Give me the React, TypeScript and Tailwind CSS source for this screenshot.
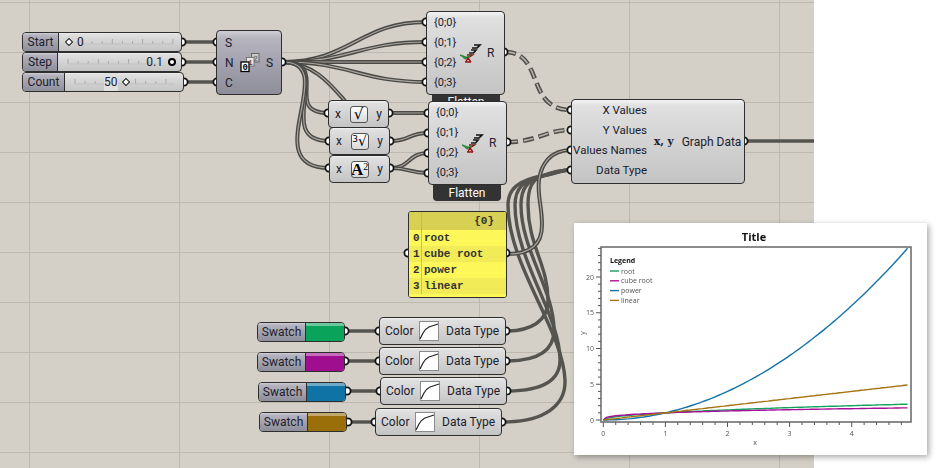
import type { ReactNode } from "react";

const nodeSkin =
  "absolute flex items-center whitespace-nowrap rounded-[4px] border border-[#2e2e2e] bg-linear-to-b from-[#f4f4f4] via-[#e0e0e0] via-[7%] to-[#c4c4c4]";
const graySkin = "bg-linear-to-b from-[#d0cfd6] via-[#b4b3be] via-[12%] to-[#8e8d9a]";

const doubleWires = [
  "M283 62C350 62 360 22 426 22",
  "M283 62C350 62 360 42 426 42",
  "M283 62L426 62",
  "M283 62C350 62 360 82 426 82",
  "M283 62C315 64 330 84 345 101",
  "M283 62C332 62 282 113 328 113",
  "M283 62C336 62 272 141 329 141",
  "M283 62C342 62 255 168 329 168",
  "M390 113L428 113",
  "M391 141C410 141 408 133 428 133",
  "M391 168C410 168 408 153 428 153",
  "M391 168C410 168 408 173 428 173",
  "M508 254C530 254 542 245 542 225C542 205 537 195 539 180C541 165 550 150 571 150",
];

const dashedWires = ["M505 52C545 52 525 110 571 110", "M507 142C538 142 545 130 571 130"];

const singleWires = [
  "M182 42H217",
  "M182 62H217",
  "M184 82H217",
  "M345 331H380",
  "M345 361H380",
  "M347 391H381",
  "M348 422H376",
  "M744 141H814",
  "M506 331C530 331 548 322 548 300C548 265 528 245 528 205C528 188 532 180 542 176S560 170 571 170",
  "M506 361C535 361 554 352 554 330C554 290 521 250 521 205C521 188 528 180 542 176S560 170 571 170",
  "M507 391C540 391 560 382 560 360C560 315 515 260 515 205C515 188 524 180 542 176S560 170 571 170",
  "M503 422C545 422 566 405 565 380C563 330 508 265 508 205C508 188 520 180 542 176S560 170 571 170",
];

const grips = [
  [182, 42], [182, 62], [184, 82], [217, 42], [217, 62], [217, 82], [282, 62],
  [426, 22], [426, 42], [426, 62], [426, 82], [504, 52],
  [428, 113], [428, 133], [428, 153], [428, 173], [507, 142],
  [328, 113], [329, 141], [329, 168], [389, 113], [390, 141], [390, 168],
  [571, 110], [571, 130], [571, 150], [571, 170], [744, 141],
  [408, 253], [506, 253],
  [345, 331], [345, 361], [347, 391], [348, 422],
  [379, 331], [379, 361], [380, 391], [375, 422],
  [506, 331], [506, 361], [507, 391], [502, 422],
];

function Wires() {
  return (
    <svg className="absolute inset-0" width="814" height="468" fill="none">
      {singleWires.map((d) => (
        <path key={d} d={d} stroke="#55544f" strokeWidth="3.4" />
      ))}
      {doubleWires.map((d) => (
        <g key={d}>
          <path d={d} stroke="#4a4945" strokeWidth="4" />
          <path d={d} stroke="#a9a69f" strokeWidth="1.2" />
        </g>
      ))}
      {dashedWires.map((d) => (
        <g key={d}>
          <path d={d} stroke="#4e4d49" strokeWidth="4.6" strokeDasharray="11 5" />
          <path d={d} stroke="#b5b2ab" strokeWidth="1.6" strokeDasharray="9.6 6.4" strokeDashoffset="-0.7" />
        </g>
      ))}
      {grips.map(([x, y]) => (
        <circle key={`${x}-${y}`} cx={x} cy={y} r="3.6" fill="#fff" stroke="#111" strokeWidth="1.8" />
      ))}
    </svg>
  );
}

function Ticks({ from, to, y }: { from: number; to: number; y: number }) {
  const marks = [];
  for (let x = from, i = 0; x <= to; x += 10.1, i++) marks.push({ x, tall: i % 3 === 0 });
  return (
    <svg className="absolute inset-0 h-full w-full" fill="none">
      {marks.map((m) => (
        <line key={m.x} x1={m.x} x2={m.x} y1={y - (m.tall ? 5 : 3)} y2={y} stroke="#a8a8a8" />
      ))}
      <line x1={from} x2={to} y1={y} y2={y} stroke="#c2c2c2" />
    </svg>
  );
}

function Knob({ round }: { round?: boolean }) {
  if (round) return <div className="h-[8px] w-[8px] rounded-full border-2 border-black bg-white" />;
  return <div className="h-[6px] w-[6px] rotate-45 border-[1.5px] border-[#111] bg-white" />;
}

function Slider({
  className,
  label,
  labelClass,
  trackClass,
  children,
  ticks,
}: {
  className: string;
  label: string;
  labelClass: string;
  trackClass: string;
  children: ReactNode;
  ticks: { from: number; to: number };
}) {
  return (
    <div className={`${nodeSkin} h-[20px] overflow-hidden ${className}`}>
      <div className={`flex h-full items-center justify-center border-r border-[#2e2e2e] ${graySkin} ${labelClass}`}>
        {label}
      </div>
      <div className={`relative flex h-full flex-1 items-center ${trackClass}`}>
        <Ticks from={ticks.from} to={ticks.to} y={11} />
        {children}
      </div>
    </div>
  );
}

function FlattenIcon() {
  return (
    <svg width="22" height="22" viewBox="0 0 22 22" fill="none" strokeWidth="1.7">
      <path d="M14 3H20L17 6H12" stroke="#111" />
      <path d="M11 8H16L13.5 11H9" stroke="#1c1c1c" />
      <path d="M7 13H12L9 15" stroke="#7a1010" />
      <path d="M0 13L5 15C7 16 9 15 10 13" stroke="#2f8a3a" />
      <path d="M3 15L6 17" stroke="#2f8a3a" />
      <path d="M8 15L6 20M8 16L11 20M5 20H11" stroke="#9a1414" strokeWidth="1.3" />
    </svg>
  );
}

function Flatten({ className, tabClass, rows }: { className: string; tabClass: string; rows: string[] }) {
  return (
    <>
      <div
        className={`absolute h-[16px] w-[68px] overflow-hidden rounded-b-[4px] bg-[#333333] text-center text-[12px] leading-[16px] text-white ${tabClass}`}
      >
        Flatten
      </div>
      <div className={`${nodeSkin} h-[84px] w-[79px] ${className}`}>
        <div className="flex w-[33px] flex-col pl-[7px]">
          {rows.map((r) => (
            <div key={r} className="flex h-[20px] items-center text-[11px]">
              {r}
            </div>
          ))}
        </div>
        <FlattenIcon />
        <span className="ml-[5px]">R</span>
      </div>
    </>
  );
}

function Expression({ className, children }: { className: string; children: ReactNode }) {
  return (
    <div className={`${nodeSkin} h-[28px] w-[61px] justify-between px-[6px] ${className}`}>
      <span>x</span>
      <div className="flex h-[17px] w-[18px] items-center justify-center overflow-hidden rounded-[3px] border border-[#555] bg-linear-to-b from-white to-[#d8d8d8] font-['DejaVu_Sans',sans-serif] text-black">
        {children}
      </div>
      <span>y</span>
    </div>
  );
}

function Swatch({ className, color }: { className: string; color: string }) {
  return (
    <div className={`${nodeSkin} h-[20px] w-[88px] overflow-hidden ${className}`}>
      <div className={`flex h-full w-[48px] items-center justify-center border-r border-[#2e2e2e] ${graySkin}`}>
        Swatch
      </div>
      <div className={`h-full flex-1 border-t-[3px] border-white/40 ${color}`} />
    </div>
  );
}

function ColorNode({ className }: { className: string }) {
  return (
    <div className={`${nodeSkin} h-[28px] w-[127px] pl-[5px] ${className}`}>
      <span className="w-[34px]">Color</span>
      <svg width="20" height="20" viewBox="0 0 20 20" fill="none">
        <rect x="0.5" y="0.5" width="19" height="19" fill="#fff" stroke="#8c8c8c" />
        <path d="M1 18L4 12C6 8 8 7 10 6L19 3" stroke="#222" strokeWidth="1.2" />
      </svg>
      <span className="ml-[7px]">Data Type</span>
    </div>
  );
}

function ParamPanel() {
  const rows = [
    ["0", "root", "bg-[#fdf75a]"],
    ["1", "cube root", "bg-[#f1eb57]"],
    ["2", "power", "bg-[#fdf75a]"],
    ["3", "linear", "bg-[#f1eb57]"],
  ];
  return (
    <div className="absolute left-[408px] top-[211px] flex h-[87px] w-[99px] flex-col overflow-hidden rounded-[3px] border border-[#2e2e2e] bg-[#fdf75a] font-['Liberation_Mono',monospace] text-[11px] font-bold text-[#333]">
      <div className="flex h-[18px] justify-between bg-[#d7d053] pr-[12px] leading-[17px]">
        <span className="w-[13px] border-r border-[#c2bc4a]" />
        <span className="pt-[1px]">{"{0}"}</span>
      </div>
      {rows.map(([i, text, bg]) => (
        <div key={i} className={`flex h-[16px] items-center ${bg}`}>
          <span className="w-[13px] border-r border-[#c9c34e] pl-[4px] leading-[16px]">{i}</span>
          <span className="pl-[2px]">{text}</span>
        </div>
      ))}
      <div className="flex-1 bg-[#fdf75a]" />
    </div>
  );
}

const sx = (v: number) => 29.3 + 62.1 * v;
const sy = (v: number) => 197 - 7.15 * v;

function curve(fn: (x: number) => number) {
  const pts = [];
  for (let x = 0; x <= 4.9; x += 0.05) pts.push(`${sx(x).toFixed(1)},${sy(fn(x)).toFixed(1)}`);
  return pts.join(" ");
}

const series = [
  { name: "root", color: "#16a05f", fn: (x: number) => Math.sqrt(x) },
  { name: "cube root", color: "#a8109a", fn: (x: number) => Math.cbrt(x) },
  { name: "power", color: "#1673a8", fn: (x: number) => x * x },
  { name: "linear", color: "#a5730f", fn: (x: number) => x },
];

function Chart() {
  const xTicks = Array.from({ length: 25 }, (_, i) => i * 0.2);
  const yTicks = Array.from({ length: 25 }, (_, i) => i);
  return (
    <div className="absolute left-[574px] top-[223px] h-[232px] w-[353px] bg-white shadow-[2px_2px_6px_rgba(0,0,0,0.35)]">
      <svg width="353" height="232" fill="none" className="blur-[0.4px] font-['Open_Sans',sans-serif]">
        <text x="180" y="18" textAnchor="middle" fontSize="11" fontWeight="700" fill="#111">
          Title
        </text>
        {xTicks.map((v, i) => (
          <line key={v} x1={sx(v)} x2={sx(v)} y1="199" y2={i % 5 === 0 ? 204 : 202} stroke="#555" />
        ))}
        {yTicks.map((v) => (
          <line key={v} x1="27" x2={v % 5 === 0 ? 22 : 24} y1={sy(v)} y2={sy(v)} stroke="#555" />
        ))}
        {series.map((s) => (
          <polyline key={s.name} points={curve(s.fn)} stroke={s.color} strokeWidth="1.4" />
        ))}
        <rect x="27" y="24" width="310" height="175" stroke="#666" strokeWidth="1.5" />
        {[0, 1, 2, 3, 4].map((v) => (
          <text key={v} x={sx(v)} y="213" textAnchor="middle" fontSize="7" fill="#555">
            {v}
          </text>
        ))}
        {[0, 5, 10, 15, 20].map((v) => (
          <text key={v} x="20" y={sy(v) + 2.5} textAnchor="end" fontSize="7" fill="#555">
            {v}
          </text>
        ))}
        <text x="181" y="222" textAnchor="middle" fontSize="7" fill="#555">
          x
        </text>
        <text x="11" y="110" textAnchor="middle" fontSize="7" fill="#555" transform="rotate(-90 11 110)">
          y
        </text>
        <text x="36" y="40" fontSize="7" fontWeight="700" fill="#111">
          Legend
        </text>
        {series.map((s, i) => (
          <g key={s.name}>
            <line x1="36" x2="45" y1={48 + i * 9.8} y2={48 + i * 9.8} stroke={s.color} strokeWidth="1.4" />
            <text x="47" y={50.5 + i * 9.8} fontSize="7" fill="#555">
              {s.name}
            </text>
          </g>
        ))}
      </svg>
    </div>
  );
}

export default function App() {
  return (
    <div className="relative h-[468px] w-[936px] overflow-hidden bg-white font-['Roboto',sans-serif] text-[12px] text-[#20202c]">
      <div className="relative h-full w-[814px] bg-[#d4d0c8] bg-[linear-gradient(to_right,#bdb9b1_1px,transparent_1px),linear-gradient(to_bottom,#bdb9b1_1px,transparent_1px)] bg-size-[150px_50px] bg-position-[29px_2px]">
        <Wires />

        <Slider
          className="left-[22px] top-[32px] w-[160px]"
          label="Start"
          labelClass="w-[36px]"
          trackClass="pl-[7px]"
          ticks={{ from: 23, to: 114 }}
        >
          <Knob />
          <span className="relative ml-[5px]">0</span>
        </Slider>
        <Slider
          className="left-[22px] top-[52px] w-[160px]"
          label="Step"
          labelClass="w-[35px]"
          trackClass="justify-end pr-[5px]"
          ticks={{ from: 10, to: 98 }}
        >
          <span className="relative mr-[5px]">0.1</span>
          <Knob round />
        </Slider>
        <Slider
          className="left-[22px] top-[72px] w-[162px]"
          label="Count"
          labelClass="w-[42px]"
          trackClass="pl-[39px]"
          ticks={{ from: 10, to: 110 }}
        >
          <span className="relative mr-[5px] bg-[#e0e0e0]">50</span>
          <Knob />
        </Slider>

        <div className={`absolute left-[216px] top-[30px] flex h-[65px] w-[66px] items-center justify-between rounded-[4px] border border-[#2e2e2e] px-[8px] ${graySkin}`}>
          <div className="flex flex-col">
            <span className="h-[20px] leading-[20px]">S</span>
            <span className="h-[20px] leading-[20px]">N</span>
            <span className="h-[20px] leading-[20px]">C</span>
          </div>
          <svg width="20" height="20" viewBox="0 0 20 20" className="font-['Liberation_Mono',monospace]">
            <rect x="11.5" y="0.5" width="7.5" height="8.5" fill="#c8c8c8" stroke="#666" />
            <text x="13" y="8" fontSize="8" fill="#555">2</text>
            <rect x="6.5" y="4.5" width="7.5" height="8.5" fill="#e8e8e8" stroke="#777" />
            <text x="8" y="12" fontSize="8" fill="#222">1</text>
            <rect x="1" y="9" width="8" height="9.5" fill="#fff" stroke="#000" strokeWidth="1.3" />
            <text x="2.5" y="17" fontSize="9" fontWeight="700" fill="#000">0</text>
          </svg>
          <span>S</span>
        </div>

        <Flatten
          className="left-[426px] top-[11px]"
          tabClass="left-[432px] top-[94px]"
          rows={["{0;0}", "{0;1}", "{0;2}", "{0;3}"]}
        />
        <Flatten
          className="left-[428px] top-[101px]"
          tabClass="left-[433px] top-[185px]"
          rows={["{0;0}", "{0;1}", "{0;2}", "{0;3}"]}
        />

        <Expression className="left-[328px] top-[100px]">
          <span className="text-[15px] leading-none">√</span>
        </Expression>
        <Expression className="left-[329px] top-[127px]">
          <span className="text-[14px] leading-none">
            <sup className="text-[9px]">3</sup>√
          </span>
        </Expression>
        <Expression className="left-[329px] top-[155px]">
          <span className="font-['Liberation_Serif',serif] text-[17px] font-bold leading-none">
            A<sup className="text-[10px] font-normal">2</sup>
          </span>
        </Expression>

        <div className={`${nodeSkin} left-[571px] top-[99px] h-[85px] w-[174px]`}>
          <div className="flex w-[75px] flex-col pb-[4px] text-right text-[11.5px]">
            <span className="h-[20px] leading-[20px]">X Values</span>
            <span className="h-[20px] leading-[20px]">Y Values</span>
            <span className="h-[20px] leading-[20px]">Values Names</span>
            <span className="h-[20px] leading-[20px]">Data Type</span>
          </div>
          <span className="ml-[7px] font-['DejaVu_Serif',serif] text-[10.5px] font-bold">x, y</span>
          <span className="ml-[8px]">Graph Data</span>
        </div>

        <ParamPanel />

        <Swatch className="left-[257px] top-[322px]" color="bg-[#0aa35a]" />
        <Swatch className="left-[257px] top-[352px]" color="bg-[#a00e90]" />
        <Swatch className="left-[258px] top-[382px]" color="bg-[#0f73a5]" />
        <Swatch className="left-[259px] top-[412px]" color="bg-[#9a6f0a]" />

        <ColorNode className="left-[379px] top-[317px]" />
        <ColorNode className="left-[379px] top-[347px]" />
        <ColorNode className="left-[380px] top-[377px]" />
        <ColorNode className="left-[375px] top-[408px]" />
      </div>
      <Chart />
    </div>
  );
}
